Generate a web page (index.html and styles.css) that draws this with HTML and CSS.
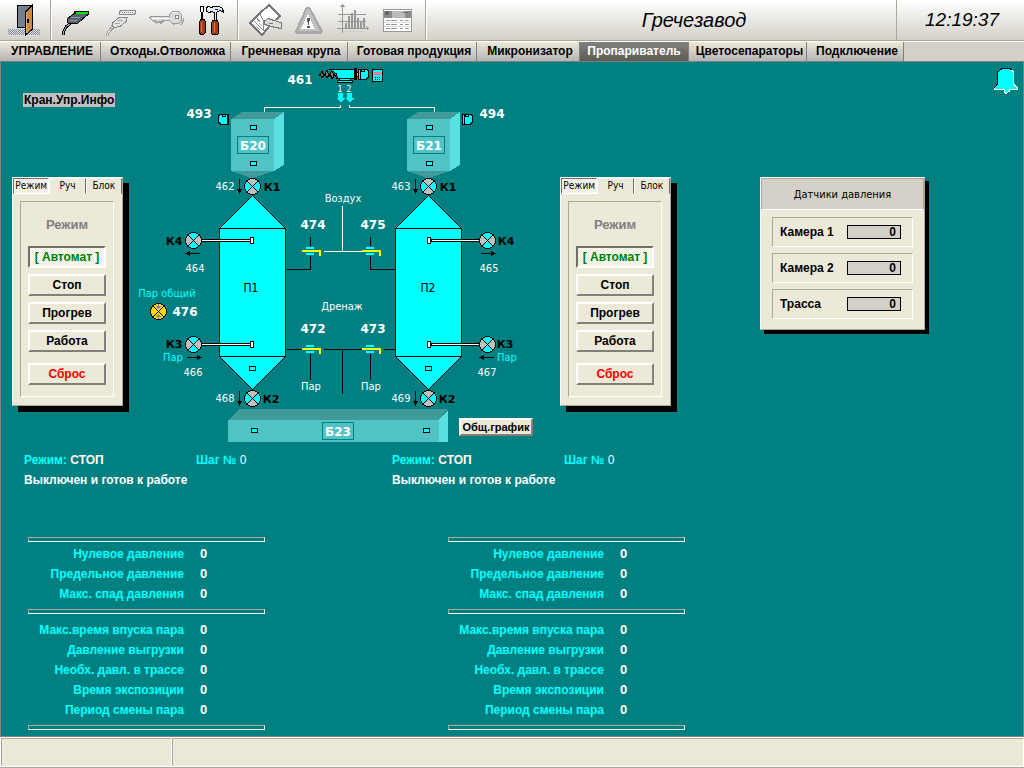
FILE: index.html
```html
<!DOCTYPE html>
<html lang="ru">
<head>
<meta charset="utf-8">
<title>Гречезавод</title>
<link rel="stylesheet" href="styles.css">
</head>
<body>
<header class="toolbar">
  <div class="tools tools-exit">
    <button class="tool" type="button" aria-label="Выход">
      <svg viewBox="0 0 32 32"><path fill="#dde2e6" d="M0 25h32v7H0z"/><path fill="none" stroke="#7d8994" stroke-dasharray="1 1" d="M0 25.500h32M1 26.500h31M0 27.500h32M1 28.500h31M0 29.500h32M1 30.500h31"/><path fill="#74808f" stroke="#000" d="M9.500 1.500h15v22h-15z"/><path fill="#d08848" stroke="#000" d="M24.500 1v24l-7 6V8z"/><path fill="#e8b070" d="M18 9l1-1v20l-1 1z"/><path fill="#fff" stroke="#000" d="M19.500 15.500h1v3h-1z"/></svg>
    </button>
  </div>
  <div class="tools tools-main">
    <button class="tool" type="button" aria-label="Подключить">
      <svg viewBox="0 0 32 32"><path fill="none" stroke="#000" stroke-width="3" d="M11 19l-5 4-2 4-1 4"/><path fill="none" stroke="#8d9ba8" d="M11 19l-5 4-2 4-1 4"/><path fill="#566370" stroke="#000" d="M15 9h12l-1 3-8 7-9 1-2-2 1-4z"/><path fill="none" stroke="#8d9ba8" d="M11 13l9 1M10 16l7 1"/><path fill="#111" d="M14 7h15v3l-2 2-1-2H14z"/><path fill="#00e800" d="M16 8h12v2H16z"/></svg>
    </button>
    <button class="tool" type="button" aria-label="Отключить">
      <svg viewBox="0 0 32 32"><path fill="none" stroke="#999" stroke-width="3" d="M9 22l-4 3-3 4-1 3"/><path fill="none" stroke="#eee" d="M9 22l-4 3-3 4-1 3"/><path fill="#e4e4e4" stroke="#888" d="M13 13.500h8l-1 4-6 5-6 1-2-2 1-3z"/><path fill="none" stroke="#aaa" d="M11 16l6 1M9 19l5 1"/><path fill="#eee" stroke="#888" d="M14.500 6.500h15v2l-1 2h-15v-2z"/><path fill="none" stroke="#777" stroke-dasharray="1 1" d="M16 8.500h12"/></svg>
    </button>
    <button class="tool" type="button" aria-label="Доступ">
      <svg viewBox="0 0 32 32"><path fill="#aaa" d="M1 15h18l4 6h7l2-4v-4l-4 8h-6l-5-4h-5l-3 3-3-2-2 2z"/><path fill="#dadada" stroke="#999" d="M-2.500 13.500l2-1h18v-2l3-3h6l3 3v6l-3 3h-6l-3-3h-7l-1 2-2-1-2 1-2-2-2 1z"/><path fill="none" stroke="#fff" d="M0 14h18M20 9l2-1h3"/><circle cx="25" cy="13" r="2" fill="#fff" stroke="#888"/></svg>
    </button>
    <button class="tool" type="button" aria-label="Настройки">
      <svg viewBox="0 0 32 32"><path fill="#fff" stroke="#000" d="M2.500 2.500h3v5l-1 1v7h-1v-7l-1-1z"/><path fill="#a03c18" stroke="#000" d="M2.500 15.500h4l1 3v10l-2 2h-3l-1-2v-10zM14.500 16.500h5l1 3v10l-1 1h-5l-1-1v-10z"/><path fill="none" stroke="#d87848" d="M3.500 18v10M16.500 19v9"/><path fill="#e4e8f0" stroke="#000" d="M8.500 3.500l2-1 3 1 2-1h6l3 2 1 4-3-2-3 1-1 1v8h-2v-8l-3-1-2 1-3-1z"/><path stroke="#00f" d="M17 5.500h3"/></svg>
    </button>
  </div>
  <div class="tools tools-extra">
    <button class="tool" type="button" aria-label="Журнал">
      <svg viewBox="0 0 32 32"><path fill="#fff" stroke="#777" stroke-width="2" d="M10 10l10-9 11 11-9 8-9 11L1 19z"/><path fill="none" stroke="#888" d="M5 17l9 9M8 14l3 4M11 10l4 8M14 27V18"/><path fill="none" stroke="#aaa" stroke-dasharray="2 1" d="M5 20l6 6M8 17l5 5"/><path fill="#ddd" stroke="#777" d="M15 17.500l4-3 6 2 7 2v6l-5-1-5-1-6-2z"/><path stroke="#777" d="M20 19l4 1"/></svg>
    </button>
    <button class="tool" type="button" aria-label="Аварии">
      <svg viewBox="0 0 32 32"><path fill="#aaa" d="M13 3h4l13 24-1 3H3l-1-3z"/><path fill="#c0c0c0" d="M14 5h2l11 22H5z"/><path fill="#fff" d="M15 10l7 15H8z"/><path fill="#555" d="M14 14h3l-1 7h-1zM14 22h3v2h-3z"/></svg>
    </button>
    <button class="tool" type="button" aria-label="Графики">
      <svg viewBox="0 0 32 32"><path fill="none" stroke="#999" d="M5.500 1v28M0 24.500h32M1 10.500h28M1 17.500h28M3.500 3l2-2 2 2M29.500 22.500l2 2-2 2"/><path fill="#aaa" stroke="#999" d="M8.500 19.500h1v5h-1zM11.500 12.500h1v12h-1zM14.500 9.500h1v15h-1zM17.500 6.500h1v18h-1zM20.500 14.500h1v10h-1zM23.500 17.500h1v7h-1zM26.500 14.500h1v10h-1z"/><path stroke="#ccc" stroke-dasharray="2 1" d="M8 27.500h20"/></svg>
    </button>
    <button class="tool" type="button" aria-label="Отчёты">
      <svg viewBox="0 0 32 32"><path fill="#fff" stroke="#999" d="M2.500 5.500h28v22h-28z"/><path fill="#8c8c8c" d="M3 7h27v7H3z"/><path fill="#bbb" d="M11 7h13v7H11z"/><circle cx="6" cy="9" r="2" fill="#666"/><path stroke="#666" stroke-dasharray="2 1" d="M22 8.500h7"/><path fill="none" stroke="#ddd" d="M3 18.500h27M3 22.500h27"/><path fill="none" stroke="#999" stroke-dasharray="4 1 6 3 3 2 4 2" d="M5 16.500h24M5 20.500h24M5 24.500h24"/></svg>
    </button>
  </div>
  <h1 class="plant-name">Гречезавод</h1>
  <time class="clock">12:19:37</time>
</header>

<nav class="tabs">
  <a class="tab" href="#control">УПРАВЛЕНИЕ</a>
  <a class="tab" href="#waste">Отходы.Отволожка</a>
  <a class="tab" href="#groats">Гречневая крупа</a>
  <a class="tab" href="#product">Готовая продукция</a>
  <a class="tab" href="#micronizer">Микронизатор</a>
  <a class="tab tab-active" href="#steamer" aria-current="page">Пропариватель</a>
  <a class="tab" href="#sorters">Цветосепараторы</a>
  <a class="tab" href="#connection">Подключение</a>
</nav>

<main class="screen">
  <section class="mimic">
    <div class="side">
      <a class="info-link" href="#info">Кран.Упр.Инфо</a>
      <section class="panel mode-panel">
        <div class="mode-tabs">
          <button class="mode-tab pressed" type="button">Режим</button>
          <button class="mode-tab" type="button">Руч</button>
          <button class="mode-tab" type="button">Блок</button>
        </div>
        <div class="mode-body">
          <h2 class="mode-title">Режим</h2>
          <button class="cmd cmd-auto pressed" type="button">[ Автомат ]</button>
          <button class="cmd" type="button">Стоп</button>
          <button class="cmd" type="button">Прогрев</button>
          <button class="cmd" type="button">Работа</button>
          <button class="cmd cmd-reset" type="button">Сброс</button>
        </div>
      </section>
    </div>

    <div class="diagram">
      <svg class="scheme" viewBox="130 62 426 384">
        <defs>
          <g id="valve">
            <circle r="8" fill="#0ff"/>
            <path fill="#c0c0c0" d="M0 0L-5.600-5.600A8 8 0 0 1 5.600-5.600zM0 0L-5.600 5.600A8 8 0 0 0 5.600 5.600z"/>
            <path fill="none" stroke="#000" d="M-5.600-5.600L5.600 5.600M5.600-5.600L-5.600 5.600"/>
            <circle r="8" fill="none" stroke="#000"/>
          </g>
          <g id="arrow"><path stroke="#000" d="M-7 0H7"/><path fill="#000" d="M8 0L3-2.500v5z"/></g>
          <g id="hatch"><path fill="#0ff" stroke="#000" d="M-2.500-1.500h6v4h-6z"/></g>
          <g id="gate">
            <path fill="#0ff" d="M-5-4h8v2h-8zM-5 2h8v2h-8z"/>
            <path fill="#ff0" d="M-9-1h19v6H8V1H-9z"/>
          </g>
          <g id="motor">
            <path fill="#0ff" stroke="#000" d="M-5-3l2-2H5V5H-3L-5 3z"/>
            <path fill="none" stroke="#000" d="M3.500-5V5M-1-5v2h3v-2"/>
          </g>
          <g id="bunker">
            <path fill="#3f9a9a" d="M231 119l11-7h42l-10 7zM231 171h43l-20 7h-3z"/>
            <path fill="#50c4c4" d="M231 119h43v52h-43z"/>
            <path fill="#5ae0e0" d="M274 119l10-7v53l-10 6z"/>
            <path fill="none" stroke="#008080" d="M237.500 136.500h31v17h-31z"/>
            <use href="#hatch" x="253" y="127"/><use href="#hatch" x="253" y="163"/>
          </g>
          <g id="vessel">
            <path fill="#0ff" stroke="#000" d="M252.500 195.500l33 33v128l-33 33-33-33v-128zM219.500 228.500h66M219.500 356.500h66"/>
            <use href="#hatch" x="252" y="368"/>
          </g>
        </defs>

        <path class="line-white" d="M264.500 113v-5.500h76V105M349.500 105v2.500h85v5.500"/>
        <path fill="#777" stroke="#000" d="M319 76l3-5 2 5 3-6 2 6 3-6 2 6 3-6v9l-2-4-3 4-2-5-3 4-2-4-3 4-2-4z"/>
        <path fill="#0ff" stroke="#000" d="M330 69.500h25v9h-17l-2-5zM339.500 78.500h11v2h-11zM337.500 80.500h15v2h-15zM354.500 68.500h2v11h-2zM356.500 72.500h2v4h-2z"/>
        <use href="#motor" transform="translate(363.500 74) scale(-1 1)"/>
        <path fill="#0ff" stroke="#000" d="M372.500 69.500h10v12h-10z"/>
        <path fill="#d88" d="M374 72h7v3h-7z"/><path stroke="#000" stroke-dasharray="1 1" d="M375 77.500h6M375 79.500h6"/>
        <path fill="#0ff" d="M338 93h5v5h2l-4 4h-1l-4-4h2zM347 93h5v5h2l-4 4h-1l-4-4h2z"/>

        <use href="#bunker"/><use href="#bunker" x="176"/>
        <use href="#motor" x="223.500" y="119"/>
        <use href="#motor" transform="translate(467.500 119) scale(-1 1)"/>

        <path fill="#3f9a9a" d="M228 420l11-11h209l-9 11z"/>
        <path fill="#50c4c4" d="M228 420h211v22H228z"/>
        <path fill="#5ae0e0" d="M439 420l9-10v32h-9z"/>
        <path fill="none" stroke="#008080" d="M322.500 422.500h31v17h-31z"/>
        <use href="#hatch" x="254" y="430"/><use href="#hatch" x="426" y="430"/>

        <use href="#vessel"/><use href="#vessel" x="176"/>

        <path class="line-black" d="M310.500 237v9M310.500 256v13.500H286M370.500 237v9M370.500 256v13.500H395M286 349.500h16M310.500 354v26M324 349.500h38M342.500 349.500V394M370.500 354v26M384 349.500h11"/>
        <path class="line-white" d="M342.500 206v45.500M324 251.500h38"/>
        <use href="#gate" x="311" y="251"/><use href="#gate" x="371" y="251"/>
        <use href="#gate" x="311" y="349"/><use href="#gate" x="371" y="349"/>

        <path fill="#fff" stroke="#000" d="M201 239.500h49v2h-49zM250.500 237.500h3v6h-3zM201 343.500h49v2h-49zM250.500 341.500h3v6h-3zM431 239.500h49v2h-49zM427.500 237.500h3v6h-3zM431 343.500h49v2h-49zM427.500 341.500h3v6h-3z"/>

        <use href="#valve" x="252.500" y="186.500"/><use href="#valve" x="428.500" y="186.500"/>
        <use href="#valve" x="252.500" y="398.500"/><use href="#valve" x="428.500" y="398.500"/>
        <use href="#valve" transform="translate(193.500 240.500) rotate(90)"/>
        <use href="#valve" transform="translate(193.500 344.500) rotate(90)"/>
        <use href="#valve" transform="translate(487.500 240.500) rotate(90)"/>
        <use href="#valve" transform="translate(487.500 344.500) rotate(90)"/>
        <circle cx="158.500" cy="311.500" r="8" fill="#ffd800" stroke="#000"/>
        <path fill="none" stroke="#000" d="M153 306l11 11M164 306l-11 11"/>
        <path fill="#888" d="M158 304h1v2h2l-2.500 3-2.500-3h2zM158 319h1v-2h2l-2.500-3-2.500 3h2z"/>

        <use href="#arrow" transform="translate(239.500 186) rotate(90)"/>
        <use href="#arrow" transform="translate(415.500 186) rotate(90)"/>
        <use href="#arrow" transform="translate(239.500 398) rotate(90)"/>
        <use href="#arrow" transform="translate(415.500 398) rotate(90)"/>
        <use href="#arrow" transform="translate(193 253.500) rotate(180)"/>
        <use href="#arrow" x="488" y="253.500"/>
        <use href="#arrow" x="194" y="357.500"/>
        <use href="#arrow" transform="translate(487 357.500) rotate(180)"/>

        <g class="t-num">
          <text x="300" y="84">461</text><text x="199" y="118">493</text><text x="492" y="118">494</text>
          <text x="313" y="229">474</text><text x="373" y="229">475</text>
          <text x="313" y="333">472</text><text x="373" y="333">473</text><text x="185" y="316">476</text>
        </g>
        <g class="t-unit"><text x="253" y="150">Б20</text><text x="429" y="150">Б21</text><text x="338" y="436">Б23</text></g>
        <g class="t-small">
          <text x="225" y="190">462</text><text x="401" y="190">463</text>
          <text x="195" y="272">464</text><text x="489" y="272">465</text>
          <text x="193" y="376">466</text><text x="487" y="376">467</text>
          <text x="225" y="402">468</text><text x="401" y="402">469</text>
          <text x="343" y="202">Воздух</text><text x="342" y="310">Дренаж</text>
          <text x="311" y="390">Пар</text><text x="371" y="390">Пар</text>
        </g>
        <g class="t-small t-cyan"><text x="167" y="297">Пар общий</text><text x="173" y="361">Пар</text><text x="507" y="361">Пар</text></g>
        <g class="t-small t-black t-vessel"><text x="251" y="292">П1</text><text x="428" y="292">П2</text></g>
        <g class="t-valve">
          <text x="272" y="191">К1</text><text x="448" y="191">К1</text>
          <text x="174" y="245">К4</text><text x="506" y="245">К4</text>
          <text x="174" y="348">К3</text><text x="505" y="348">К3</text>
          <text x="271" y="403">К2</text><text x="447" y="403">К2</text>
        </g>
        <g class="t-tiny"><text x="340" y="92">1</text><text x="349" y="92">2</text></g>
      </svg>
      <button class="chart-button" type="button">Общ.график</button>
    </div>

    <div class="side">
      <section class="panel mode-panel">
        <div class="mode-tabs">
          <button class="mode-tab pressed" type="button">Режим</button>
          <button class="mode-tab" type="button">Руч</button>
          <button class="mode-tab" type="button">Блок</button>
        </div>
        <div class="mode-body">
          <h2 class="mode-title">Режим</h2>
          <button class="cmd cmd-auto pressed" type="button">[ Автомат ]</button>
          <button class="cmd" type="button">Стоп</button>
          <button class="cmd" type="button">Прогрев</button>
          <button class="cmd" type="button">Работа</button>
          <button class="cmd cmd-reset" type="button">Сброс</button>
        </div>
      </section>
    </div>

    <div class="side side-sensors">
      <button class="bell" type="button" aria-label="Сигнал">
        <svg viewBox="0 0 24 26"><path fill="#0ff" stroke="#fff" d="M8 .5h8l3.500 3.500v12l4 4v1.500H15v2l-3 2-2-2v-2H.5V20l3-4V4z"/><path fill="none" stroke="#000" d="M.5 20l3-4V4L8 .5h8l1.500 1.500"/></svg>
      </button>
      <section class="panel sensor-panel">
        <h2 class="sensor-title">Датчики давления</h2>
        <div class="sensor-list">
          <div class="sensor"><label for="cam1">Камера 1</label><output id="cam1">0</output></div>
          <div class="sensor"><label for="cam2">Камера 2</label><output id="cam2">0</output></div>
          <div class="sensor"><label for="trace">Трасса</label><output id="trace">0</output></div>
        </div>
      </section>
    </div>
  </section>

  <section class="states">
    <div class="state">
      <p class="state-mode"><span>Режим:</span> <b>СТОП</b></p>
      <p class="state-step"><span>Шаг №</span> 0</p>
      <p class="state-text">Выключен и готов к работе</p>
    </div>
    <div class="state">
      <p class="state-mode"><span>Режим:</span> <b>СТОП</b></p>
      <p class="state-step"><span>Шаг №</span> 0</p>
      <p class="state-text">Выключен и готов к работе</p>
    </div>
  </section>

  <section class="params">
    <div class="param-set">
      <hr class="rule">
      <table class="param-table">
        <tr><th scope="row">Нулевое давление</th><td>0</td></tr>
        <tr><th scope="row">Предельное давление</th><td>0</td></tr>
        <tr><th scope="row">Макс. спад давления</th><td>0</td></tr>
      </table>
      <hr class="rule">
      <table class="param-table param-table-main">
        <tr><th scope="row">Макс.время впуска пара</th><td>0</td></tr>
        <tr><th scope="row">Давление выгрузки</th><td>0</td></tr>
        <tr><th scope="row">Необх. давл. в трассе</th><td>0</td></tr>
        <tr><th scope="row">Время экспозиции</th><td>0</td></tr>
        <tr><th scope="row">Период смены пара</th><td>0</td></tr>
      </table>
      <hr class="rule">
    </div>
    <div class="param-set">
      <hr class="rule">
      <table class="param-table">
        <tr><th scope="row">Нулевое давление</th><td>0</td></tr>
        <tr><th scope="row">Предельное давление</th><td>0</td></tr>
        <tr><th scope="row">Макс. спад давления</th><td>0</td></tr>
      </table>
      <hr class="rule">
      <table class="param-table param-table-main">
        <tr><th scope="row">Макс.время впуска пара</th><td>0</td></tr>
        <tr><th scope="row">Давление выгрузки</th><td>0</td></tr>
        <tr><th scope="row">Необх. давл. в трассе</th><td>0</td></tr>
        <tr><th scope="row">Время экспозиции</th><td>0</td></tr>
        <tr><th scope="row">Период смены пара</th><td>0</td></tr>
      </table>
      <hr class="rule">
    </div>
  </section>
</main>

<footer class="statusbar">
  <div class="status-cell status-short"></div>
  <div class="status-cell"></div>
</footer>
</body>
</html>
```
FILE: styles.css
```css
:root {
  --teal: #008080;
  --face: #ece9d8;
  --silver: #d4d0c8;
  --shade: #aca899;
  --bold: "Liberation Sans", Arial, sans-serif;
  --plain: "DejaVu Sans Condensed", "DejaVu Sans", sans-serif;
}

* { box-sizing: border-box; margin: 0; padding: 0; }

body {
  display: flex;
  flex-direction: column;
  min-height: 100vh;
  background: var(--teal);
  font: bold 12px/20px var(--bold);
  color: #000;
}

button { font: inherit; color: inherit; cursor: pointer; }
a { color: inherit; text-decoration: none; }

/* Toolbar */
.toolbar {
  display: flex;
  height: 41px;
  background: linear-gradient(#fff, var(--silver));
  border-bottom: 1px solid var(--shade);
}
.tools { display: flex; align-items: center; border-right: 1px solid var(--shade); box-shadow: 1px 0 0 #fff; }
.tools-exit { width: 51px; padding-left: 8px; }
.tools-main { width: 187px; padding-left: 9px; gap: 14px; }
.tools-extra { width: 188px; padding-left: 11px; gap: 12px; }
.tool { width: 32px; height: 32px; border: 0; background: none; }
.tool svg { display: block; width: 32px; height: 32px; overflow: visible; shape-rendering: crispEdges; }
.plant-name { flex: 1; text-align: center; padding-left: 66px; font: italic 20px/40px var(--bold); }
.clock { width: 128px; padding-left: 3px; border-left: 1px solid var(--shade); text-align: center; font: italic 19px/40px var(--bold); }

/* Page tabs */
.tabs {
  display: grid;
  grid-template-columns: 101px 130px 117px 129px 103px 109px 118px 97px;
  height: 21px;
  background: var(--silver);
  border-top: 1px solid #fff;
  border-bottom: 1px solid #808080;
}
.tab {
  overflow: hidden;
  padding-left: 4px;
  text-align: center;
  white-space: nowrap;
  line-height: 18px;
  background: linear-gradient(#ece9d8, #b4b4b4);
  border-right: 1px solid #808080;
}
.tab-active { padding-left: 0; color: #fff; background: linear-gradient(#808080, #5c5c50); }

/* Screen */
.screen { flex: 1; padding-left: 11px; border-left: 1px solid #808080; border-right: 1px solid #808080; }
.mimic { display: grid; grid-template-columns: 118px 430px 200px 1fr; }
.side { display: flex; flex-direction: column; align-items: flex-start; justify-content: flex-end; padding-bottom: 40px; }
.info-link { margin: 0 0 70px 11px; padding: 0 1px; background: #c0c0c0; line-height: 14px; }

.panel { background: var(--face); border: 1px solid; border-color: #fff var(--shade) var(--shade) #fff; }
.mode-panel { width: 111px; box-shadow: 6px 6px 0 #000; }
.mode-tabs { display: flex; height: 16px; }
.mode-tab {
  flex: 1;
  background: var(--face);
  border: 1px solid;
  border-color: #fff #716f64 var(--face) #fff;
  font: 10px/14px var(--plain);
}
.mode-body {
  display: flex;
  flex-direction: column;
  gap: 6px;
  margin: 7px 8px 8px 7px;
  padding: 13px 7px 11px;
  border: 1px solid;
  border-color: var(--shade) #fff #fff var(--shade);
}
.mode-title { margin-bottom: 5px; text-align: center; font-size: 13px; line-height: 20px; color: #808080; }
.cmd {
  height: 22px;
  background: var(--face);
  border: 2px solid;
  border-color: #fff #808078 #808078 #fff;
  white-space: nowrap;
  line-height: 18px;
}
.pressed {
  background: repeating-conic-gradient(#fff 0 25%, var(--face) 0 50%) 0 0 / 2px 2px;
  border-color: #716f64 #fff #fff #716f64;
}
.cmd-auto { color: #008000; }
.cmd-reset { margin-top: 5px; color: #f00; }

.side-sensors { align-items: stretch; padding-bottom: 116px; }
.bell { align-self: flex-end; width: 24px; height: 26px; margin: 6px 5px auto 0; border: 0; background: none; }
.bell svg { display: block; width: 24px; height: 26px; shape-rendering: crispEdges; }
.sensor-panel { width: 165px; box-shadow: 4px 4px 0 #000; }
.sensor-title {
  padding-top: 2px;
  background: var(--silver);
  border: 1px solid;
  border-color: var(--shade) var(--shade) #fff var(--shade);
  text-align: center;
  font: 11px/28px var(--plain);
}
.sensor-list { display: grid; gap: 6px; padding: 7px 11px 10px; }
.sensor {
  display: flex;
  align-items: center;
  justify-content: space-between;
  height: 30px;
  padding: 0 11px 0 7px;
  border: 1px solid;
  border-color: var(--shade) #fff #fff var(--shade);
}
.sensor output { width: 54px; padding-right: 4px; border: 1px solid #000; background: var(--silver); text-align: right; line-height: 12px; }

/* Process diagram */
.diagram { position: relative; }
.scheme { display: block; width: 426px; height: auto; shape-rendering: crispEdges; }
.scheme text { text-anchor: middle; }
.line-white { fill: none; stroke: #fff; }
.line-black { fill: none; stroke: #000; }
.t-num { font: bold 12px "DejaVu Sans", sans-serif; fill: #fff; }
.t-unit { font: bold 12px "DejaVu Sans", sans-serif; fill: #fff; }
.t-small { font: 11px var(--plain); fill: #fff; }
.t-cyan { fill: #0ff; }
.t-black { fill: #000; }
.t-vessel { font-size: 12px; }
.t-valve { font: bold 11px "DejaVu Sans", sans-serif; }
.t-tiny { font: 8px "DejaVu Sans Mono", monospace; fill: #fff; }
.chart-button {
  position: absolute;
  left: 329px;
  top: 356px;
  width: 74px;
  height: 18px;
  background: var(--face);
  border: 2px solid;
  border-color: #fff #808078 #808078 #fff;
  font-size: 11px;
  line-height: 13px;
}

/* State lines */
.states { display: grid; grid-template-columns: 368px 368px; padding: 4px 0 0 12px; color: #fff; }
.state { display: grid; grid-template-columns: 172px 1fr; }
.state span { color: #0ff; }
.state-step { font-weight: normal; }
.state-step span { font-weight: bold; }
.state-text { grid-column: 1 / -1; }

/* Parameters */
.params { display: grid; grid-template-columns: 237px 237px; column-gap: 183px; padding: 47px 0 6px 16px; }
.rule { height: 5px; border: 1px solid; border-color: var(--shade) #fff #fff var(--shade); }
.param-table { width: 100%; margin: 2px 0 5px; border-collapse: collapse; }
.param-table-main { margin: 6px 0 5px; }
.param-table th { width: 156px; height: 20px; text-align: right; color: #0ff; }
.param-table td { padding-left: 16px; font-size: 13px; color: #fff; }

/* Status bar */
.statusbar { display: flex; gap: 1px; height: 32px; padding: 1px 1px 1px; background: #fff; border-top: 1px solid #808080; border-bottom: 1px solid var(--shade); }
.status-cell { flex: 1; background: var(--face); border-top: 1px solid var(--shade); border-left: 1px solid var(--shade); }
.status-short { flex: 0 0 170px; }
```
